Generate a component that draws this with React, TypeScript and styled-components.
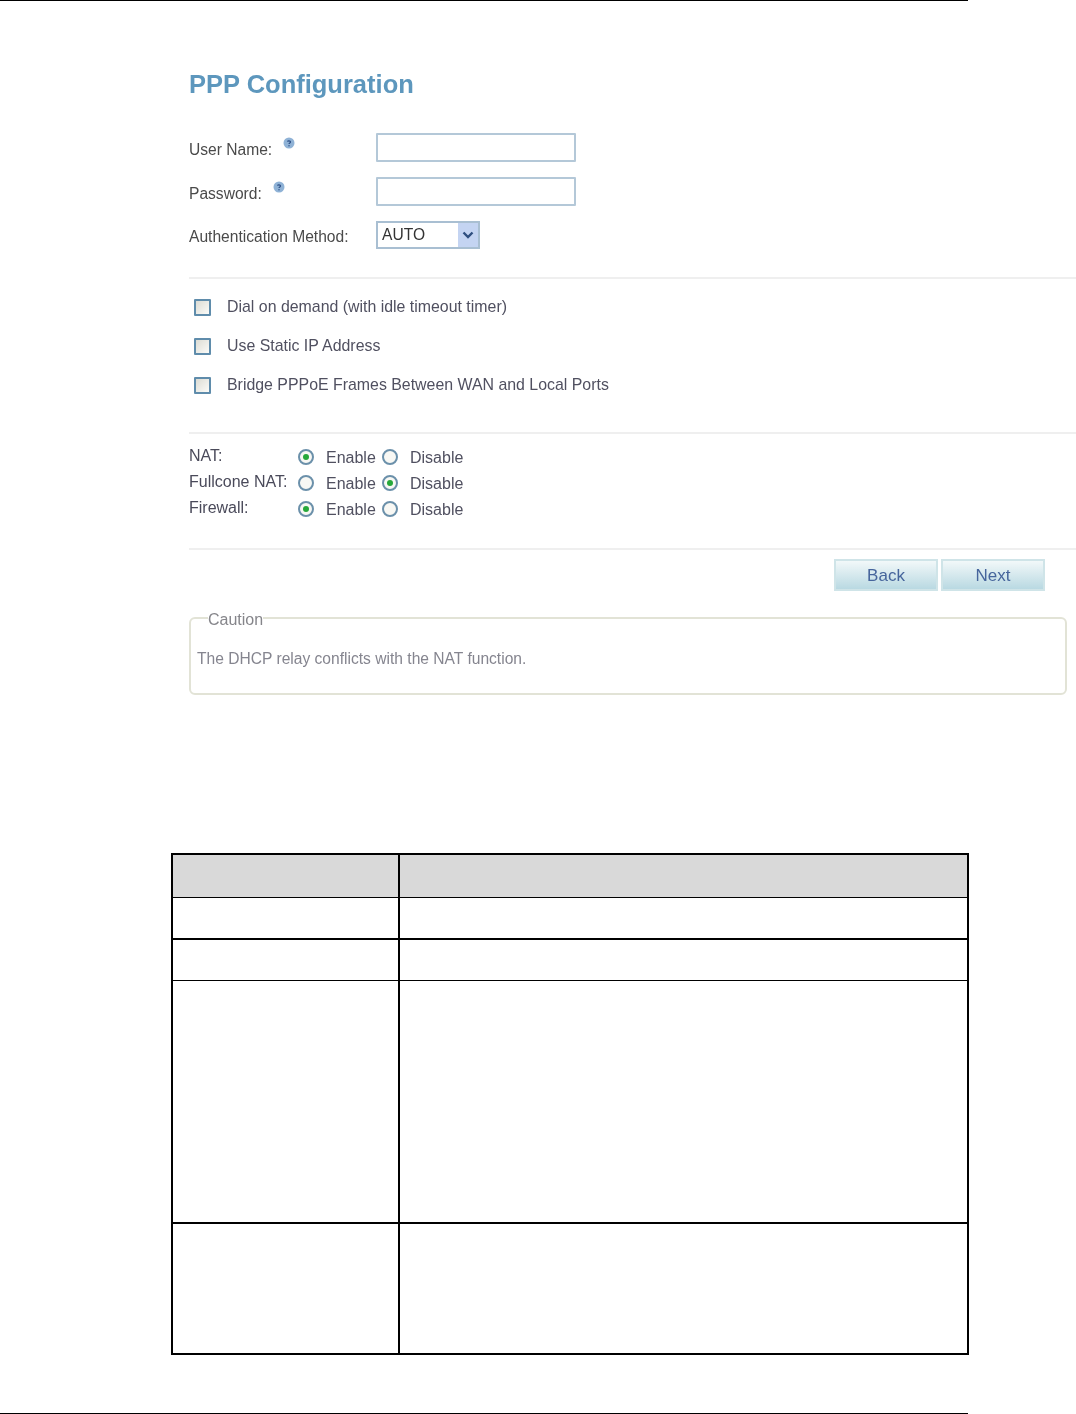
import React from "react";
import styled, { createGlobalStyle } from "styled-components";

const Global = createGlobalStyle`
  html, body { margin: 0; padding: 0; background: #fff; }
  body { font-family: "Liberation Sans", Arial, sans-serif; }
`;

const Page = styled.div`
  position: relative;
  width: 1076px;
  height: 1414px;
  overflow: hidden;
  display: flex;
  flex-direction: column;
`;

const PageRule = styled.div<{ $top?: number }>`
  width: 968px;
  height: 1px;
  flex: none;
  background: #000;
  margin-top: ${(p) => p.$top ?? 0}px;
`;

const Shot = styled.section`
  margin-left: 189px;
  width: 887px;
  display: flex;
  flex-direction: column;
  filter: blur(0.6px);
`;

const Title = styled.h1`
  margin: 68px 0 0;
  font-size: 25.5px;
  line-height: 30px;
  font-weight: 700;
  color: #5d97bd;
`;

const FormGrid = styled.div`
  margin-top: 34px;
  display: grid;
  grid-template-columns: 187px 1fr;
  grid-auto-rows: auto;
  row-gap: 15px;
  align-items: center;
`;

const FieldLabel = styled.label`
  display: flex;
  align-items: center;
  padding-top: 4px;
  font-size: 15.6px;
  color: #4a4a4a;
  white-space: nowrap;
`;

const HelpMark = styled.svg`
  width: 12px;
  height: 12px;
  margin-left: 11px;
  margin-bottom: 13px;
  flex: none;
`;

const TextField = styled.div`
  box-sizing: border-box;
  width: 200px;
  height: 29px;
  border: 2px solid #b4c8d8;
  border-radius: 1px;
  background: #fff;
`;

const SelectBox = styled.div`
  box-sizing: border-box;
  width: 104px;
  height: 28px;
  border: 2px solid #a9bfd2;
  display: flex;
  align-items: center;
  justify-content: space-between;
  padding: 0 0 0 4px;
  font-size: 15.6px;
  color: #333;
`;

const SelectArrow = styled.span`
  width: 20px;
  height: 24px;
  display: flex;
  align-items: center;
  justify-content: center;
  background: #c4d4f2;
`;

const Divider = styled.hr<{ $top: number }>`
  width: 100%;
  height: 2px;
  border: 0;
  margin: ${(p) => p.$top}px 0 0;
  background: #efefef;
`;

const CheckList = styled.div`
  margin-top: 19px;
  padding-left: 5px;
  display: flex;
  flex-direction: column;
  gap: 21px;
`;

const CheckRow = styled.div`
  display: flex;
  align-items: center;
  height: 18px;
  font-size: 15.9px;
  color: #505060;
`;

const CheckText = styled.span`
  margin-top: -1px;
`;

const CheckBox = styled.span`
  box-sizing: border-box;
  width: 17px;
  height: 17px;
  margin-right: 16px;
  flex: none;
  border: 2px solid #5f8cab;
  border-radius: 1px;
  background: linear-gradient(135deg, #dcdcd4, #fbfbf8);
`;

const NatGrid = styled.div`
  margin-top: 10px;
  display: flex;
  flex-direction: column;
`;

const NatRow = styled.div`
  height: 26px;
  display: grid;
  grid-template-columns: 109px 28px 56px 28px auto;
  align-items: center;
  font-size: 16px;
  color: #505060;
`;

const NatLabel = styled.span`
  margin-top: -3px;
  white-space: nowrap;
  color: #4a4a5a;
`;

const NatOption = styled.span`
  padding-top: 1px;
`;

const Radio = styled.span<{ $on?: boolean }>`
  box-sizing: border-box;
  width: 16px;
  height: 16px;
  border: 2px solid #6b90aa;
  border-radius: 50%;
  display: flex;
  align-items: center;
  justify-content: center;
  background: #f8f8f4;
  &::after {
    content: "";
    width: 6px;
    height: 6px;
    border-radius: 50%;
    background: ${(p) => (p.$on ? "#27a83a" : "transparent")};
  }
`;

const ButtonBar = styled.div`
  margin-top: 9px;
  padding-right: 31px;
  display: flex;
  justify-content: flex-end;
  gap: 3px;
`;

const NavButton = styled.button`
  box-sizing: border-box;
  width: 104px;
  height: 32px;
  padding: 1px 0 0;
  border: 2px solid #cfe4e8;
  background: linear-gradient(#f2f8f9, #b9d9e2);
  font-family: inherit;
  font-size: 17px;
  color: #46659c;
`;

const Caution = styled.fieldset`
  box-sizing: border-box;
  width: 878px;
  height: 88px;
  margin: 16px 0 0;
  padding: 0 6px;
  border: 2px solid #e2e3d6;
  border-radius: 6px;
  color: #85858f;
  font-size: 15.6px;
`;

const CautionTitle = styled.legend`
  margin-left: 11px;
  padding: 4px 0 0;
  font-size: 16px;
  line-height: 18px;
  color: #85858a;
`;

const CautionText = styled.p`
  margin: 21px 0 0;
  line-height: 18px;
`;

const Table = styled.div`
  box-sizing: border-box;
  width: 798px;
  margin: 158px 0 0 171px;
  border: 2px solid #000;
  display: flex;
  flex-direction: column;
  flex: none;
`;

const TableRow = styled.div<{ $h: number; $rule: number; $head?: boolean }>`
  box-sizing: border-box;
  height: ${(p) => p.$h}px;
  border-bottom: ${(p) => p.$rule}px solid #000;
  display: grid;
  grid-template-columns: 225px 1fr;
  background: ${(p) => (p.$head ? "#d9d9d9" : "#fff")};
`;

const TableCell = styled.div`
  & + & {
    border-left: 2px solid #000;
  }
`;

const rows = [
  { h: 43, rule: 1, head: true },
  { h: 42, rule: 2 },
  { h: 41, rule: 1 },
  { h: 243, rule: 2 },
  { h: 129, rule: 0 },
];

const Help = () => (
  <HelpMark viewBox="0 0 12 12">
    <circle cx="6" cy="6" r="5.5" fill="#8fb2d6" />
    <path d="M4.5 4.6c.2-1 2.9-1.2 3 .3 0 1-1.4 1-1.5 2.1" fill="none" stroke="#2d4f86" strokeWidth="1.2" />
    <circle cx="6" cy="8.8" r=".7" fill="#2d4f86" />
  </HelpMark>
);

const nat: [string, boolean][] = [
  ["NAT:", true],
  ["Fullcone NAT:", false],
  ["Firewall:", true],
];

export default function App() {
  return (
    <Page>
      <Global />
      <PageRule />
      <Shot>
        <Title>PPP Configuration</Title>
        <FormGrid>
          <FieldLabel>User Name:<Help /></FieldLabel>
          <TextField />
          <FieldLabel>Password:<Help /></FieldLabel>
          <TextField />
          <FieldLabel>Authentication Method:</FieldLabel>
          <SelectBox>
            AUTO
            <SelectArrow>
              <svg width="12" height="8" viewBox="0 0 12 8">
                <path d="M1.5 1.5 6 6l4.5-4.5" fill="none" stroke="#2f4f7f" strokeWidth="2.4" />
              </svg>
            </SelectArrow>
          </SelectBox>
        </FormGrid>
        <Divider $top={28} />
        <CheckList>
          <CheckRow><CheckBox /><CheckText>Dial on demand (with idle timeout timer)</CheckText></CheckRow>
          <CheckRow><CheckBox /><CheckText>Use Static IP Address</CheckText></CheckRow>
          <CheckRow><CheckBox /><CheckText>Bridge PPPoE Frames Between WAN and Local Ports</CheckText></CheckRow>
        </CheckList>
        <Divider $top={38} />
        <NatGrid>
          {nat.map(([label, enabled]) => (
            <NatRow key={label}>
              <NatLabel>{label}</NatLabel>
              <Radio $on={enabled} />
              <NatOption>Enable</NatOption>
              <Radio $on={!enabled} />
              <NatOption>Disable</NatOption>
            </NatRow>
          ))}
        </NatGrid>
        <Divider $top={26} />
        <ButtonBar>
          <NavButton>Back</NavButton>
          <NavButton>Next</NavButton>
        </ButtonBar>
        <Caution>
          <CautionTitle>Caution</CautionTitle>
          <CautionText>The DHCP relay conflicts with the NAT function.</CautionText>
        </Caution>
      </Shot>
      <Table>
        {rows.map((r, i) => (
          <TableRow key={i} $h={r.h} $rule={r.rule} $head={r.head}>
            <TableCell />
            <TableCell />
          </TableRow>
        ))}
      </Table>
      <PageRule $top={58} />
    </Page>
  );
}
